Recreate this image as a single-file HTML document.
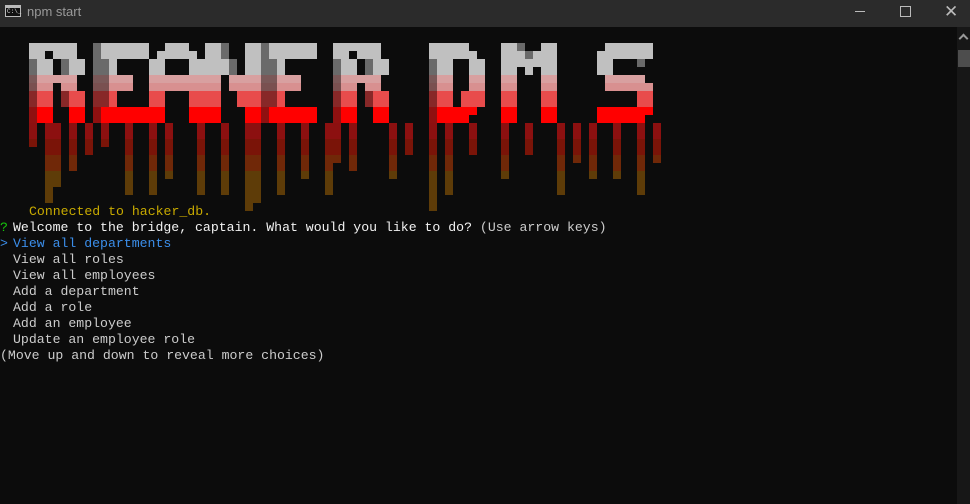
<!DOCTYPE html>
<html><head><meta charset="utf-8"><style>
html,body{margin:0;padding:0;}
body{width:970px;height:504px;background:#0c0c0c;position:relative;overflow:hidden;font-family:"Liberation Mono",monospace;}
#tb{position:absolute;left:0;top:0;width:970px;height:27px;background:#2b2b2b;}
#tb .t{position:absolute;left:27px;top:4px;color:#9a9a9a;font:13px "Liberation Sans",sans-serif;}
#icon{position:absolute;left:5px;top:5px;width:14px;height:10px;border:1px solid #bbb;background:#111;}
#icon:before{content:"";position:absolute;left:0;top:0;width:14px;height:2px;background:#bbb;}
#icon span{position:absolute;left:1px;top:2px;font:6px "Liberation Mono",monospace;color:#ddd;}
.min{position:absolute;left:855px;top:11px;width:10px;height:1px;background:#bbb;}
.max{position:absolute;left:900px;top:6px;width:9px;height:9px;border:1px solid #bbb;}
.cls{position:absolute;left:944px;top:2px;color:#bbb;font:17px "Liberation Sans",sans-serif;}
#sb{position:absolute;left:957px;top:27px;width:13px;height:477px;background:#171717;}
#sb .th{position:absolute;left:1px;top:23px;width:12px;height:17px;background:#4d4d4d;}
#sb .ar{position:absolute;left:3px;top:8px;width:5px;height:5px;border-left:2px solid #999;border-top:2px solid #999;transform:rotate(45deg);}
.c{position:absolute;width:8px;height:8px;}
.l{position:absolute;font-size:13.2px;line-height:16px;white-space:pre;color:#cccccc;}
</style></head><body>
<div id="tb"><div id="icon"><span>C:\_</span></div><div class="t">npm start</div>
<div class="min"></div><div class="max"></div><div class="cls">✕</div></div>
<div id="sb"><div class="ar"></div><div class="th"></div></div>
<div id="art"></div>
<div class="l" style="left:29px;top:204px;color:#c8aa00">Connected to hacker_db.</div>
<div class="l" style="left:0;top:220px;color:#16c60c">?</div>
<div class="l" style="left:13px;top:220px;"><span style="color:#f2f2f2">Welcome to the bridge, captain. What would you like to do?</span> (Use arrow keys)</div>
<div class="l" style="left:0;top:236px;color:#3b8eea">&gt;</div>
<div class="l" style="left:13px;top:236px;color:#3b8eea">View all departments</div>
<div class="l" style="left:13px;top:252px;">View all roles</div>
<div class="l" style="left:13px;top:268px;">View all employees</div>
<div class="l" style="left:13px;top:284px;">Add a department</div>
<div class="l" style="left:13px;top:300px;">Add a role</div>
<div class="l" style="left:13px;top:316px;">Add an employee</div>
<div class="l" style="left:13px;top:332px;">Update an employee role</div>
<div class="l" style="left:0;top:348px;">(Move up and down to reveal more choices)</div>
<script>
var art=document.getElementById('art');
var rowCol=['#c0c0c0','#c0c0c0','#c0c0c0','#c0c0c0','#d8a0a0','#d89090','#e84c4c','#e84c4c','#ff0000','#ff0000'];
var rowDim=['#6a6a6a','#6a6a6a','#6a6a6a','#6a6a6a','#7a5858','#7a5050','#882828','#882828','#901010','#901010'];
function cell(c,r,col){var d=document.createElement('div');d.className='c';d.style.left=(29+8*c)+'px';d.style.top=(43+8*r)+'px';d.style.background=col;art.appendChild(d);}
var L={
R:["GGGGGG.","GG.GGG.","sGG.sGG","sGG.sGG","sGGGGG.","sGG.GG.","sGG.sGG","sGG.sGG","sGG..GG","sGG..GG"],
E:["sGGGGGG","sGGGGGG","ssG....","ssG....","ssGGG..","ssGGG..","ssG....","ssG....","sGGGGGG","sGGGGGG"],
A:["..GGG..",".GGGGG.","GG...GG","GG...GG","GGGGGGG","GGGGGGG","GG...GG","GG...GG","GG...GG","GG...GG"],
N:["GGs..GG","GGs..GG","GGGs.GG","GGGs.GG","GG.GGGG","GG.GGGG","GG..GGG","GG..GGG","GG...GG","GG...GG"],
D:["GGGGG..","GGGGGG.","sGG..GG","sGG..GG","sGG..GG","sGG..GG","sGG.GGG","sGG.GGG","sGGGGG.","sGGGG.."],
M:["GGs..GG","GGGsGGG","GGGGGGG","GG.G.GG","GG...GG","GG...GG","GG...GG","GG...GG","GG...GG","GG...GG"],
S:[".GGGGGG","GGGGGGG","GG...s.","GG.....",".GGGGG.",".GGGGGG",".....GG",".....GG","GGGGGGG","GGGGGG."]};
var word=[['R',0],['E',8],['A',15],['N',22],['E',29],['R',38],['D',50],['M',59],['S',71]];
word.forEach(function(w){var b=L[w[0]];for(var r=0;r<10;r++)for(var i=0;i<7;i++){var k=b[r][i];if(k=='G')cell(w[1]+i,r,rowCol[r]);else if(k=='s')cell(w[1]+i,r,rowDim[r]);}});
var drips=[[0,12],[2,19],[3,17],[5,15],[7,13],[9,12],[12,18],[15,18],[17,16],[21,18],[24,18],[27,20],[28,19],[31,18],[34,16],[37,18],[38,14],[40,15],[45,16],[47,13],[50,20],[52,18],[55,13],[59,16],[62,13],[66,18],[68,14],[70,16],[73,16],[76,18],[78,14]];
drips.forEach(function(d){for(var r=10;r<=d[1];r++){var col=r<12?'#8c1010':r<14?'#7a1408':r<16?'#702808':'#5e3c08';cell(d[0],r,col);}});
</script>
</body></html>
